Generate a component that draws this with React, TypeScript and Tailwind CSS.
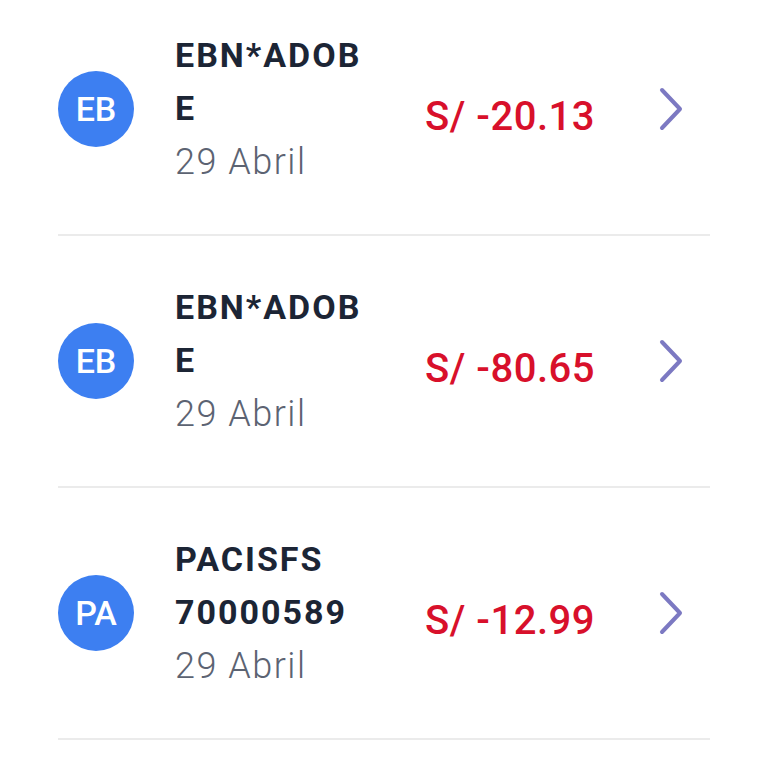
import React from "react"

interface Movement {
  initials: string
  lines: string[]
  date: string
  amount: string
}

const movements: Movement[] = [
  { initials: "EB", lines: ["EBN*ADOB", "E"], date: "29 Abril", amount: "S/ -20.13" },
  { initials: "EB", lines: ["EBN*ADOB", "E"], date: "29 Abril", amount: "S/ -80.65" },
  { initials: "PA", lines: ["PACISFS", "70000589"], date: "29 Abril", amount: "S/ -12.99" },
]

const Chevron = () => (
  <svg width="24" height="44" viewBox="0 0 24 44" fill="none" className="shrink-0">
    <path
      d="M3 3 L21 22 L3 41"
      stroke="#7c79c2"
      strokeWidth="4"
      strokeLinecap="round"
      strokeLinejoin="round"
    />
  </svg>
)

const MovementRow: React.FC<{ item: Movement }> = ({ item }) => (
  <div className="flex h-[252px] items-center border-b-2 border-[#ebebeb]">
    <div className="flex h-[76px] w-[76px] shrink-0 items-center justify-center rounded-full bg-[#3d7ff1] text-[34px] font-medium text-white">
      {item.initials}
    </div>
    <div className="ml-[41px] flex flex-1 flex-col">
      {item.lines.map((line) => (
        <span key={line} className="text-[34px] font-bold leading-[53px] tracking-[2px] text-[#1c2535]">
          {line}
        </span>
      ))}
      <span className="text-[36px] font-light leading-[54px] tracking-[1.5px] text-[#5c6372]">{item.date}</span>
    </div>
    <span className="pt-[16px] text-[40px] font-medium tracking-[0.5px] text-[#d8102b]">{item.amount}</span>
    <div className="ml-[64px] mr-[27px] flex items-center">
      <Chevron />
    </div>
  </div>
)

export default function App() {
  return (
    <div className="h-[768px] w-[768px] overflow-hidden bg-white font-['Roboto',sans-serif]">
      <div className="-mt-[16px] px-[58px]">
        {movements.map((item, i) => (
          <MovementRow key={i} item={item} />
        ))}
      </div>
    </div>
  )
}
